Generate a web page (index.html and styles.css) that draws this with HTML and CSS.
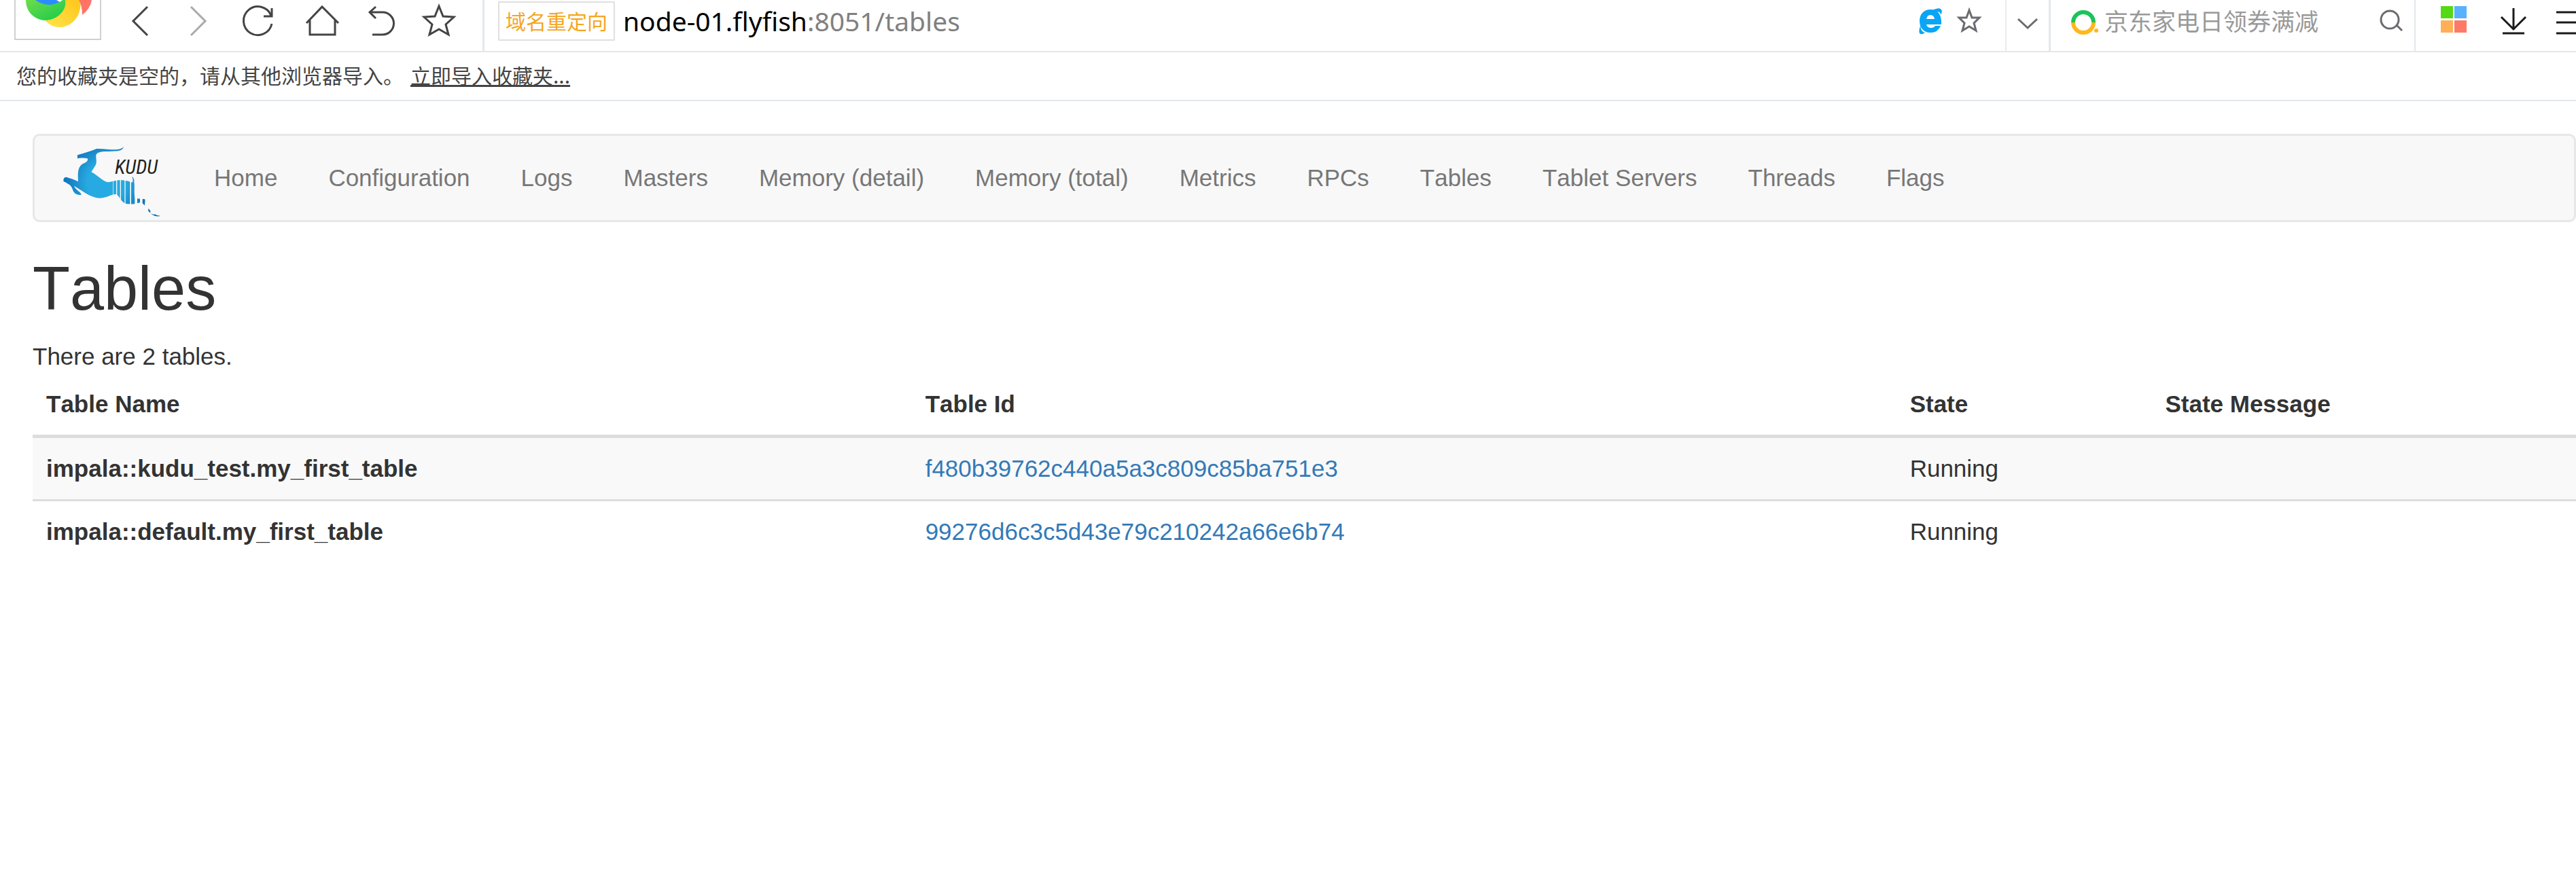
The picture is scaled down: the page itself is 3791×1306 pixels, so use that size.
FILE: index.html
```html
<!DOCTYPE html>
<html lang="en">
<head>
  <meta charset="utf-8">
  <title>Kudu</title>
  <link rel="stylesheet" href="styles.css">
</head>
<body>
  <header class="browser">
    <div class="toolbar">
      <div class="segment nav-segment">
        <button class="app-logo" aria-label="Browser menu">
          <svg width="124" height="57" viewBox="0 0 124 57">
            <defs>
              <linearGradient id="green" x1="0" y1="0" x2="1" y2="1">
                <stop offset="0" stop-color="#6fdc4a"/>
                <stop offset="1" stop-color="#16c94c"/>
              </linearGradient>
              <linearGradient id="yellow" x1="1" y1="0" x2="0" y2="1">
                <stop offset="0" stop-color="#ffc61a"/>
                <stop offset="1" stop-color="#ffe44a"/>
              </linearGradient>
            </defs>
            <path d="M44 31Q54 41 67 40C86 38 98 20 95 0H60Z" fill="url(#yellow)"/>
            <path d="M93 0H112Q110 13 98 22Q98 9 93 0Z" fill="#ff7468"/>
            <path d="M15 0H73C76 16 60 30 43 30C27 29 15 17 15 0Z" fill="url(#green)"/>
            <path d="M29 0H69Q62 6 50 7Q38 7 29 0Z" fill="#2b8cff"/>
            <path d="M60 0H69L65 3Z" fill="#fff"/>
          </svg>
        </button>
        <button class="tool" aria-label="Back">
          <svg width="88" height="62" viewBox="0 0 88 62"><path d="M55 10L34 31L55 52"/></svg>
        </button>
        <button class="tool disabled" aria-label="Forward">
          <svg width="88" height="62" viewBox="0 0 88 62"><path d="M31 10L52 31L31 52"/></svg>
        </button>
        <button class="tool" aria-label="Reload">
          <svg width="88" height="62" viewBox="0 0 88 62"><path d="M61 23A21 21 0 1 0 62 35M62 12V24H50"/></svg>
        </button>
        <button class="tool" aria-label="Home">
          <svg width="88" height="62" viewBox="0 0 88 62"><path d="M25 34L48 10L72 34M30 30V51H67V30"/></svg>
        </button>
        <button class="tool" aria-label="Undo">
          <svg width="88" height="62" viewBox="0 0 88 62"><path d="M39 10L30 18L39 27M30 18H49A16 16 0 0 1 49 51H34"/></svg>
        </button>
        <button class="tool" aria-label="Favorites">
          <svg width="88" height="62" viewBox="0 0 88 62"><path d="M44 9L50 24L66 25L54 36L58 51L44 43L30 51L34 36L22 25L38 24Z"/></svg>
        </button>
      </div>

      <div class="segment address-segment">
        <span class="redirect">域名重定向</span>
        <div class="address" role="textbox" aria-label="Address" contenteditable="true" spellcheck="false"><span class="host">node-01.flyfish</span>:8051/tables</div>
        <button class="tool" aria-label="Compatibility mode">
          <svg width="57" height="62" viewBox="0 0 57 62">
            <g class="filled" fill="#0aa5f5">
              <path fill-rule="evenodd" d="M45 36H23Q24 41 30 41Q34 41 36 38H44Q40 48 29 48C19 48 13 41 13 31C13 20 20 14 29 14C40 14 46 22 45 36ZM23 28H35Q34 22 29 22Q24 22 23 28Z"/>
              <path d="M32 15Q42 10 45 14Q47 17 44 22Q44 16 36 18ZM15 36Q13 46 21 48Q16 52 13 49Q11 45 15 36Z"/>
            </g>
          </svg>
        </button>
        <button class="tool gray" aria-label="Add to favorites">
          <svg width="58" height="62" viewBox="0 0 58 62"><path d="M29 15L33 26L44 26L36 34L39 45L29 39L19 45L22 34L14 26L25 26Z"/></svg>
        </button>
      </div>

      <div class="segment">
        <button class="tool gray" aria-label="Show history">
          <svg width="62" height="62" viewBox="0 0 62 62"><path d="M17 28L31 41L45 28"/></svg>
        </button>
      </div>

      <div class="segment search-segment">
        <svg width="40" height="62" viewBox="0 0 40 62" fill="none" stroke-width="6">
          <path d="M3 33A15 15 0 1 1 33 33" stroke="#1ac45b"/>
          <path d="M3 33A15 15 0 0 0 33 33" stroke="#ffb819"/>
          <circle cx="37" cy="45" r="3" fill="#ffb819"/>
        </svg>
        <input class="search-input" type="text" aria-label="Search" placeholder="京东家电日领券满减">
        <button class="tool gray" aria-label="Search">
          <svg width="34" height="62" viewBox="0 0 34 62"><circle cx="15" cy="29" r="13"/><path d="M25 37L33 45"/></svg>
        </button>
      </div>

      <div class="segment menu-segment">
        <button class="tool" aria-label="Apps">
          <svg width="90" height="62" viewBox="0 0 90 62">
            <g class="filled">
              <rect x="27" y="9" width="18" height="18" fill="#55d914"/>
              <rect x="47" y="9" width="18" height="18" fill="#58b2ff"/>
              <rect x="27" y="30" width="18" height="18" fill="#ffb056"/>
              <rect x="47" y="30" width="18" height="18" fill="#ff7a66"/>
            </g>
          </svg>
        </button>
        <button class="tool dark" aria-label="Downloads">
          <svg width="90" height="62" viewBox="0 0 90 62"><path d="M44 12V43M26 25L44 43L62 25M28 49H60"/></svg>
        </button>
        <button class="tool dark" aria-label="Menu">
          <svg width="46" height="62" viewBox="0 0 46 62"><path d="M17 18H48M17 33H48M17 49H48"/></svg>
        </button>
      </div>
    </div>

    <div class="bookmarks">
      <span>您的收藏夹是空的，请从其他浏览器导入。</span>
      <a href="#">立即导入收藏夹...</a>
    </div>
  </header>

  <main class="container">
    <nav class="navbar">
      <a class="brand" href="/" aria-label="Kudu">
        <svg width="150" height="116" viewBox="150 72 450 348">
          <defs>
            <radialGradient id="kudu" gradientUnits="userSpaceOnUse" cx="350" cy="265" r="190">
              <stop offset="0.45" stop-color="#27aae1"/>
              <stop offset="1" stop-color="#1072ba"/>
            </radialGradient>
          </defs>
          <path fill="url(#kudu)" d="M426 109Q420 125 400 127L360 129Q310 127 304 144C303 165 310 177 300 193L283 220C310 232 335 262 355 265C380 262 395 254 420 256Q445 258 464 266Q470 255 462 240Q474 247 472 262C476 285 470 310 476 336L520 340C524 365 535 382 548 396Q566 412 588 413Q570 420 553 409Q535 397 520 370Q508 350 490 356C475 362 455 362 440 361C415 356 408 325 393 318C375 315 350 335 320 335C280 333 250 306 207 281C214 300 240 309 239 320C222 324 205 314 201 298Q195 278 180 272Q170 265 161 262Q157 245 172 242Q200 249 225 262C224 235 220 200 245 184Q273 172 266 160Q242 155 222 160V145C250 137 280 128 306 117C335 115 370 123 400 120Q417 118 426 109Z"/>
          <g fill="#f8f8f8">
            <path d="M378 250h2v80h-2zM393 250h4v80h-4zM410 250h4v100h-4zM430 250h4v115h-4zM454 250h5v115h-5zM475 325h11v40h-11zM498 330h11v30h-11z"/>
            <path d="M522 335L537 375L533 395L518 372ZM545 386L560 401L562 409L543 403Z"/>
          </g>
          <text class="brand-text" x="387" y="228">KUDU</text>
        </svg>
      </a>
      <ul class="nav">
        <li><a href="/">Home</a></li>
        <li><a href="/config">Configuration</a></li>
        <li><a href="/logs">Logs</a></li>
        <li><a href="/masters">Masters</a></li>
        <li><a href="/mem-trackers">Memory (detail)</a></li>
        <li><a href="/memz">Memory (total)</a></li>
        <li><a href="/metrics">Metrics</a></li>
        <li><a href="/rpcz">RPCs</a></li>
        <li><a href="/tables">Tables</a></li>
        <li><a href="/tablet-servers">Tablet Servers</a></li>
        <li><a href="/threadz">Threads</a></li>
        <li><a href="/varz">Flags</a></li>
      </ul>
    </nav>

    <h1>Tables</h1>
    <p class="summary">There are 2 tables.</p>
    <table class="table">
      <thead>
        <tr>
          <th>Table Name</th>
          <th>Table Id</th>
          <th>State</th>
          <th>State Message</th>
        </tr>
      </thead>
      <tbody>
        <tr>
          <th>impala::kudu_test.my_first_table</th>
          <td><a href="/table?id=f480b39762c440a5a3c809c85ba751e3">f480b39762c440a5a3c809c85ba751e3</a></td>
          <td>Running</td>
          <td></td>
        </tr>
        <tr>
          <th>impala::default.my_first_table</th>
          <td><a href="/table?id=99276d6c3c5d43e79c210242a66e6b74">99276d6c3c5d43e79c210242a66e6b74</a></td>
          <td>Running</td>
          <td></td>
        </tr>
      </tbody>
    </table>
  </main>
</body>
</html>
```

FILE: styles.css
```css
* {
  box-sizing: border-box;
}

body {
  margin: 0;
  background: #fff;
  color: #333;
  font-family: "Liberation Sans", Arial, sans-serif;
  font-size: 35px;
  font-kerning: none;
  line-height: 50px;
  overflow-x: hidden;
}

svg {
  display: block;
}

/* browser bars */
.browser {
  font-family: "Noto Sans", "Noto Sans CJK SC", sans-serif;
}

.toolbar {
  display: flex;
  height: 77px;
  border-bottom: 2px solid #e3e8ec;
}

.segment {
  display: flex;
  align-items: center;
  padding-bottom: 13px;
  border-right: 3px solid #e3e8ec;
}

.nav-segment {
  padding-left: 21px;
  padding-right: 20px;
}

.app-logo {
  align-self: flex-start;
  margin-right: 13px;
  padding: 0;
  border: 2px solid #d0d0d0;
  border-top: none;
  background: #fff;
}

.tool {
  padding: 0;
  border: none;
  background: none;
  color: #444;
  cursor: pointer;
}

.tool svg {
  fill: none;
  stroke: currentColor;
  stroke-width: 3;
}

.tool .filled {
  stroke: none;
}

.tool.disabled {
  color: #aaa;
}

.tool.gray {
  color: #6b6b70;
}

.tool.dark {
  color: #1a1a1a;
}

.address-segment {
  flex: 1;
  padding-left: 20px;
  padding-right: 24px;
  border-right: 2px solid #ebebeb;
}

.redirect {
  padding: 0 9px 2px;
  border: 2px solid #e0e0e0;
  color: #f5a623;
  font-family: "Noto Sans CJK SC", sans-serif;
  font-size: 30px;
  line-height: 52px;
}

.address {
  flex: 1;
  margin-left: 12px;
  color: #808080;
  font-size: 39px;
  outline: none;
}

.address .host {
  color: #000;
}

.search-segment {
  width: 537px;
  padding-left: 30px;
  padding-right: 17px;
  border-right-width: 2px;
}

.search-input {
  flex: 1;
  min-width: 0;
  margin-left: 9px;
  padding: 0 0 4px;
  border: none;
  outline: none;
  background: none;
  font-family: "Noto Sans CJK SC", sans-serif;
  font-size: 35px;
}

.search-input::placeholder {
  color: #999;
  opacity: 1;
}

.menu-segment {
  padding-left: 10px;
  border-right: none;
}

.bookmarks {
  display: flex;
  align-items: center;
  gap: 10px;
  height: 72px;
  padding-left: 24px;
  padding-bottom: 4px;
  border-bottom: 2px solid #e3e8ec;
  color: #444;
  font-family: "Noto Sans CJK SC", sans-serif;
  font-size: 30px;
}

.bookmarks a {
  color: inherit;
}

/* page */
.container {
  padding: 48px 0 0 48px;
}

.navbar {
  display: flex;
  align-items: center;
  height: 130px;
  margin-bottom: 49px;
  padding-left: 39px;
  border: 3px solid #e7e7e7;
  border-radius: 10px;
  background: #f8f8f8;
}

.brand-text {
  fill: #231f20;
  font-family: "Liberation Sans Narrow", "Roboto Condensed", "Liberation Sans", sans-serif;
  font-size: 87px;
  font-style: italic;
}

.nav {
  display: flex;
  gap: 75px;
  margin: 0;
  padding-left: 75px;
  list-style: none;
}

.nav a {
  color: #777;
  text-decoration: none;
}

h1 {
  margin: 0 0 25px;
  font-size: 90px;
  font-weight: 500;
  line-height: 99px;
}

.summary {
  margin: 0;
}

.table {
  width: 100%;
  border-collapse: separate;
  border-spacing: 0;
}

.table th,
.table td {
  padding: 20px;
  text-align: left;
}

.table thead th {
  border-bottom: 5px solid #ddd;
}

.table tbody tr:nth-child(odd) {
  background: #f9f9f9;
}

.table tbody tr + tr > * {
  border-top: 3px solid #ddd;
}

.table a {
  color: #337ab7;
  text-decoration: none;
}
```
